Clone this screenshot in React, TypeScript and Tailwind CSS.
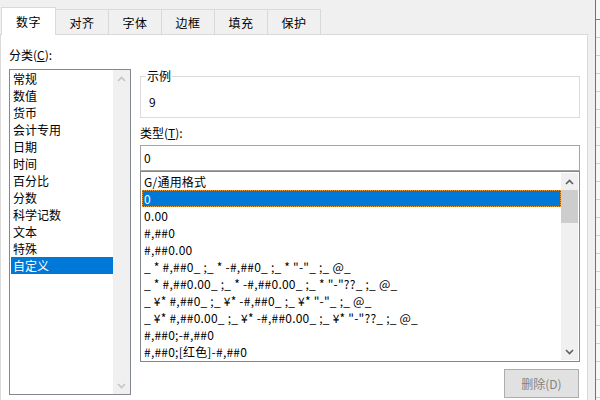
import React from "react";

const tabs = ["数字", "对齐", "字体", "边框", "填充", "保护"];

const categories = [
    "常规",
    "数值",
    "货币",
    "会计专用",
    "日期",
    "时间",
    "百分比",
    "分数",
    "科学记数",
    "文本",
    "特殊",
    "自定义",
];

const formats = [
    "G/通用格式",
    "0",
    "0.00",
    "#,##0",
    "#,##0.00",
    '_ * #,##0_ ;_ * -#,##0_ ;_ * "-"_ ;_ @_',
    '_ * #,##0.00_ ;_ * -#,##0.00_ ;_ * "-"??_ ;_ @_',
    '_ ¥* #,##0_ ;_ ¥* -#,##0_ ;_ ¥* "-"_ ;_ @_',
    '_ ¥* #,##0.00_ ;_ ¥* -#,##0.00_ ;_ ¥* "-"??_ ;_ @_',
    "#,##0;-#,##0",
    "#,##0;[红色]-#,##0",
];

const font = "font-['Microsoft_YaHei','Noto_Sans_CJK_SC',sans-serif]";

function Chevron({ up, color }: { up?: boolean; color: string }) {
    return (
        <svg width="9" height="6" viewBox="0 0 9 6">
            <polyline
                points={up ? "1,5 4.5,1.5 8,5" : "1,1 4.5,4.5 8,1"}
                fill="none"
                stroke={color}
                strokeWidth="1.6"
            />
        </svg>
    );
}

function ScrollBar({ disabled, thumb }: { disabled?: boolean; thumb?: boolean }) {
    const c = disabled ? "#c5c5c5" : "#606060";
    return (
        <div className="w-[17px] bg-[#f0f0f0] flex flex-col">
            <div className="h-[17px] flex items-center justify-center">
                <Chevron up color={c} />
            </div>
            {thumb && <div className="h-[33px] bg-[#cdcdcd]" />}
            <div className="flex-1" />
            <div className="h-[17px] flex items-center justify-center">
                <Chevron color={c} />
            </div>
        </div>
    );
}

export default function App() {
    return (
        <div className={`w-[600px] h-[400px] bg-[#f0f0f0] flex overflow-hidden text-[12px] text-black ${font}`}>
            <div className="w-[588px] flex flex-col">
                {/* Tabs */}
                <div className="h-[34px] flex items-end pl-[1px]">
                    {tabs.map((t, i) =>
                        i === 0 ? (
                            <div
                                key={t}
                                className="relative z-10 -mb-px h-[28px] w-[55px] bg-white border border-b-0 border-[#d9d9d9] flex items-center justify-center leading-[16px] tracking-[0.5px]"
                            >
                                {t}
                            </div>
                        ) : (
                            <div
                                key={t}
                                className="h-[25px] w-[54px] -ml-px bg-[#f0f0f0] border border-b-0 border-[#d9d9d9] flex items-center justify-center leading-[16px] pt-[1px] tracking-[0.5px]"
                            >
                                {t}
                            </div>
                        )
                    )}
                </div>

                {/* Panel */}
                <div className="flex-1 bg-white border-l border-t border-r border-[#d9d9d9] flex pl-[8px] gap-[9px]">
                    {/* Category */}
                    <div className="w-[122px] pt-[12px] flex flex-col">
                        <div className="leading-[16px]">
                            分类(<span className="underline">C</span>):
                        </div>
                        <div className="mt-[6px] h-[326px] border border-[#828790] flex pl-[1px]">
                            <div className="w-[102px] flex flex-col">
                                {categories.map((c, i) => (
                                    <div
                                        key={c}
                                        className={`h-[17px] leading-[17px] pl-[2px] ${
                                            i === categories.length - 1 ? "bg-[#0078d7] text-white" : ""
                                        }`}
                                    >
                                        {c}
                                    </div>
                                ))}
                            </div>
                            <ScrollBar disabled />
                        </div>
                    </div>

                    {/* Right side */}
                    <div className="w-[440px] flex flex-col">
                        <fieldset className="mt-[33px] border border-[#dcdcdc] p-0 m-0">
                            <legend className="ml-[5px] px-[1px] leading-[16px]">示例</legend>
                            <div className="pl-[8px] pt-[10px] pb-[7px] leading-[16px]">9</div>
                        </fieldset>

                        <div className="mt-[7px] leading-[16px]">
                            类型(<span className="underline">T</span>):
                        </div>
                        <div className="mt-[4px] h-[26px] border border-[#a5a5a5] flex items-center pl-[3px] leading-[16px]">
                            0
                        </div>

                        <div className="h-[191px] border border-[#828790] p-[1px] flex">
                            <div className="flex-1 flex flex-col">
                                {formats.map((f, i) => (
                                    <div
                                        key={f}
                                        className={`h-[17px] leading-[15px] whitespace-pre border tracking-[0.22px] ${
                                            i === 1
                                                ? "bg-[#0078d7] text-white border-dotted border-[#f0a040]"
                                                : "border-transparent"
                                        } pl-[1px]`}
                                    >
                                        {f}
                                    </div>
                                ))}
                            </div>
                            <ScrollBar thumb />
                        </div>

                        <div className="mt-[7px] flex justify-end pr-[1px]">
                            <button className="w-[75px] h-[29px] bg-[#e1e1e1] border border-[#adadad] text-[#838383] leading-[16px]">
                                删除(D)
                            </button>
                        </div>
                    </div>
                </div>
            </div>

            {/* Sheet edge behind the dialog */}
            <div className="flex-1 flex">
                <div className="w-[7px]" />
                <div className="w-px bg-[#1e88e5]" />
                <div className="flex-1 bg-[#f7f7f7] flex flex-col">
                    <div className="h-[20px] shrink-0 border-b border-[#7f7f7f]" />
                    {Array.from({ length: 21 }).map((_, i) => (
                        <div key={i} className="h-[18px] shrink-0 border-b border-[#d0d0d0]" />
                    ))}
                </div>
            </div>
        </div>
    );
}
